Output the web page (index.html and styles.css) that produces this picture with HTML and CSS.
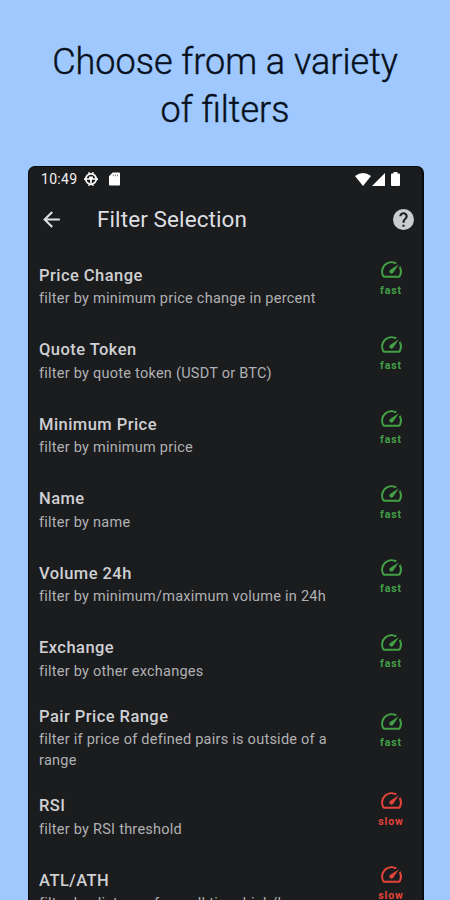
FILE: index.html
```html
<!DOCTYPE html>
<html lang="en">
<head>
<meta charset="utf-8">
<title>Filter Selection</title>
<link rel="stylesheet" href="styles.css">
</head>
<body>
<svg class="defs" width="0" height="0">
  <symbol id="gauge" viewBox="0 0 24 24"><path d="M20.38 8.57l-1.23 1.85a8 8 0 0 1-.22 7.58H5.07A8 8 0 0 1 15.58 6.85l1.85-1.23A10 10 0 0 0 3.35 19a2 2 0 0 0 1.72 1h13.85a2 2 0 0 0 1.74-1 10 10 0 0 0-.27-10.44zm-9.79 6.84a2 2 0 0 0 2.83 0l5.66-8.49-8.49 5.66a2 2 0 0 0 0 2.83z"/></symbol>
</svg>
<h1 class="headline">Choose from a variety<br>of filters</h1>
<main class="phone">
  <div class="status">
    <span class="time">10:49</span>
    <svg class="debug" viewBox="0 0 16 16"><circle cx="8" cy="8" r="6" fill="none" stroke="currentColor" stroke-width="2"/><path d="M5 0h1.500v2H5zM9.500 0H11v2H9.500zM5 14h1.500v2H5zM9.500 14H11v2H9.500zM0 7h2v2H0zM14 7h2v2h-2zM2.500 7h11v1.800H9V13H7V8.800H2.500zM5.800 5h4.400v3H5.800z"/></svg>
    <svg class="card" viewBox="0 0 12 14"><path d="M4 0h7a1 1 0 0 1 1 1v12a1 1 0 0 1-1 1H1a1 1 0 0 1-1-1V4z"/><path class="slots" d="M4.200 2h1v2h-1zM6.500 2h1v2h-1zM8.800 2h1v2h-1z"/></svg>
    <svg class="wifi" viewBox="0 0 16 13"><path d="M8 13L0 3Q8-3 16 3z"/></svg>
    <svg class="signal" viewBox="0 0 13 13"><path d="M13 0v13H0z"/></svg>
    <svg class="battery" viewBox="0 0 9 14"><path d="M2.500 0h4v1.500H8a1 1 0 0 1 1 1V13a1 1 0 0 1-1 1H1a1 1 0 0 1-1-1V2.500a1 1 0 0 1 1-1h1.500z"/></svg>
  </div>
  <header class="bar">
    <svg class="back" viewBox="0 0 24 24"><path d="M20 11H7.830l5.590-5.590L12 4l-8 8 8 8 1.410-1.410L7.830 13H20z"/></svg>
    <h2 class="title">Filter Selection</h2>
    <svg class="help" viewBox="2 2 20 20"><path d="M12 2a10 10 0 1 0 0 20 10 10 0 0 0 0-20zm1 17h-2v-2h2zm2.070-7.750l-.9.920C13.450 12.900 13 13.500 13 15h-2v-.5c0-1.100.45-2.100 1.170-2.830l1.240-1.260c.37-.36.590-.86.590-1.410a2 2 0 0 0-4 0H8a4 4 0 0 1 8 0c0 .88-.36 1.680-.93 2.250z"/></svg>
  </header>
  <ul class="list">
    <li class="row"><div class="text"><h3 class="name">Price Change</h3><p class="desc">filter by minimum price change in percent</p></div><div class="speed"><svg class="gauge"><use href="#gauge"/></svg><span class="label">fast</span></div></li>
    <li class="row"><div class="text"><h3 class="name">Quote Token</h3><p class="desc">filter by quote token (USDT or BTC)</p></div><div class="speed"><svg class="gauge"><use href="#gauge"/></svg><span class="label">fast</span></div></li>
    <li class="row"><div class="text"><h3 class="name">Minimum Price</h3><p class="desc">filter by minimum price</p></div><div class="speed"><svg class="gauge"><use href="#gauge"/></svg><span class="label">fast</span></div></li>
    <li class="row"><div class="text"><h3 class="name">Name</h3><p class="desc">filter by name</p></div><div class="speed"><svg class="gauge"><use href="#gauge"/></svg><span class="label">fast</span></div></li>
    <li class="row"><div class="text"><h3 class="name">Volume 24h</h3><p class="desc">filter by minimum/maximum volume in 24h</p></div><div class="speed"><svg class="gauge"><use href="#gauge"/></svg><span class="label">fast</span></div></li>
    <li class="row"><div class="text"><h3 class="name">Exchange</h3><p class="desc">filter by other exchanges</p></div><div class="speed"><svg class="gauge"><use href="#gauge"/></svg><span class="label">fast</span></div></li>
    <li class="row tall"><div class="text"><h3 class="name">Pair Price Range</h3><p class="desc">filter if price of defined pairs is outside of a range</p></div><div class="speed"><svg class="gauge"><use href="#gauge"/></svg><span class="label">fast</span></div></li>
    <li class="row"><div class="text"><h3 class="name">RSI</h3><p class="desc">filter by RSI threshold</p></div><div class="speed slow"><svg class="gauge"><use href="#gauge"/></svg><span class="label">slow</span></div></li>
    <li class="row"><div class="text"><h3 class="name">ATL/ATH</h3><p class="desc">filter by distance from all time high/low</p></div><div class="speed slow"><svg class="gauge"><use href="#gauge"/></svg><span class="label">slow</span></div></li>
  </ul>
</main>
</body>
</html>
```
FILE: styles.css
```css
* { box-sizing: border-box; margin: 0; padding: 0; }
body {
  display: flex;
  flex-direction: column;
  height: 900px;
  overflow: hidden;
  background: #9ec8fe;
  font-family: Roboto, sans-serif;
}
.defs { display: block; flex: none; }
svg { fill: currentColor; flex: none; }
.headline {
  height: 166px;
  padding-top: 38px;
  text-align: center;
  font-size: 36px;
  line-height: 48px;
  font-weight: 300;
  -webkit-text-stroke: 0.4px #06101c;
  color: #06101c;
  flex: none;
}
.phone {
  flex: 1;
  min-height: 0;
  width: 396px;
  margin-left: 28px;
  border: 1px solid #08090a;
  border-width: 1px 2px 0 1px;
  border-radius: 7px 7px 0 0;
  background: #1b1c1e;
  overflow: hidden;
}
.status {
  display: flex;
  align-items: center;
  height: 24px;
  padding: 0 22px 0 12px;
  color: #fff;
}
.time { width: 43px; font-size: 14px; color: #f2f2f2; letter-spacing: 0.3px; }
.debug { width: 14px; height: 14px; margin-right: 11px; }
.card { width: 11px; height: 14px; }
.slots { fill: #777; }
.wifi { width: 16px; height: 13px; margin-left: auto; }
.signal { width: 13px; height: 13px; margin: 0 6px 0 1px; }
.battery { width: 9px; height: 14px; }
.bar {
  display: flex;
  align-items: center;
  height: 57px;
  padding: 0 8px 0 10px;
  color: #dedfe2;
}
.back { width: 25px; height: 25px; }
.title {
  flex: 1;
  margin: -2px 0 0 33px;
  font-size: 22.5px;
  font-weight: 400;
  letter-spacing: 0.1px;
}
.help { width: 21px; height: 21px; color: #cbccd0; }
.list { list-style: none; }
.row {
  display: flex;
  align-items: center;
  height: 74.5px;
  padding: 0 16px 0 10px;
}
.tall { height: 83.4px; }
.text { width: 305px; padding-top: 3px; }
.name {
  font-size: 16.5px;
  line-height: 23px;
  margin-bottom: 2.5px;
  font-weight: 500;
  letter-spacing: 0.45px;
  color: #cfd0d3;
}
.desc {
  font-size: 14.5px;
  line-height: 20.700px;
  letter-spacing: 0.25px;
  color: #b0b1b4;
}
.speed {
  display: flex;
  flex-direction: column;
  align-items: center;
  width: 30px;
  margin-left: auto;
  color: #43a047;
}
.slow { color: #e5443b; }
.gauge { width: 25px; height: 25px; }
.label {
  font-size: 10.5px;
  line-height: 18px;
  margin-bottom: 13px;
  font-weight: 700;
  letter-spacing: 0.9px;
}
```
